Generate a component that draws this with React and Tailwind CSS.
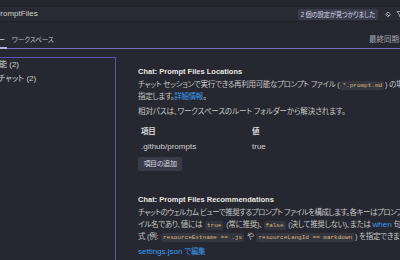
import React from "react";

const C = ({ children }) => (
  <span className="font-['Liberation_Mono',monospace] text-[6px] leading-[9px] tracking-normal bg-[#34353f] text-[#d4b87a] rounded-[2px] px-[2px] py-[1px] mx-[1px] [font-feature-settings:normal]">
    {children}
  </span>
);

const L = ({ children, className = "" }) => (
  <span className={"text-[8px] tracking-normal " + className}>{children}</span>
);

export default function App() {
  return (
    <div className="w-[400px] h-[260px] overflow-hidden bg-[#262730] text-[#c8c8c8] font-['Liberation_Sans','Noto_Sans_CJK_JP',sans-serif] [font-feature-settings:'palt'] relative">
      {/* top strip */}
      <div className="h-[7px] bg-[#24252d] border-b border-[#1f2028]" />
      {/* search row */}
      <div className="h-[15px] bg-[#292a34] border-b border-[#1f2028] flex items-center overflow-hidden">
        <span className="ml-[-5px] text-[8px] text-[#d0d0d0] whitespace-nowrap">PromptFiles</span>
        <div className="flex-1" />
        <span className="h-[11px] px-[3px] bg-[#3a3c4c] rounded-[2px] text-[6.3px] leading-[11px] tracking-[-0.2px] text-[#d6d6e0] whitespace-nowrap">
          2 個の設定が見つかりました
        </span>
        <svg className="ml-[6px] shrink-0" width="8" height="8" viewBox="0 0 16 16" fill="none" stroke="#b0b0b8" strokeWidth="1.8">
          <path d="M3 9 L8 4 L13 9 L9 13 L7 13 Z" />
          <path d="M5 7 L10 12" />
        </svg>
        <svg className="ml-[4px] mr-[-4px] shrink-0" width="8" height="8" viewBox="0 0 16 16" fill="none" stroke="#b0b0b8" strokeWidth="1.8">
          <path d="M2 3 H14 L9.5 9 V14 L6.5 12.5 V9 Z" />
        </svg>
      </div>
      {/* tabs */}
      <div className="mt-[4px] h-[23px] border-b border-[#7c6cc0] flex items-start relative">
        <div className="h-[22px] pt-[6px] flex items-center ml-[-2px] w-[9px] relative">
          <span className="text-[7px] text-[#d0d0d8] whitespace-nowrap">ー</span>
          <div className="absolute left-0 right-0 bottom-[-1px] h-[2px] bg-[#b8b0d8]" />
        </div>
        <div className="h-[22px] pt-[6px] flex items-center ml-[5px]">
          <span className="text-[6.5px] text-[#c0c0c8] whitespace-nowrap">ワークスペース</span>
        </div>
        <div className="flex-1" />
        <div className="h-[22px] pt-[6px] flex items-center mr-[-1px]">
          <span className="text-[7.5px] text-[#a8a8b0] whitespace-nowrap">最終同期:</span>
        </div>
      </div>
      {/* body */}
      <div className="flex mt-[8px]">
        <div className="w-[116px] h-[210px] shrink-0 border-t border-r border-[#5e53a8] overflow-hidden">
          <div className="h-[14px] flex items-center ml-[-9px] text-[8px] text-[#cfcfcf] whitespace-nowrap">機能 (2)</div>
          <div className="h-[14px] flex items-center ml-[-2px] text-[8px] text-[#cfcfcf] whitespace-nowrap">チャット (2)</div>
        </div>
        <div className="ml-[22px] flex-1 min-w-0 text-[7.5px] tracking-[-0.3px] whitespace-nowrap">
          <div className="mt-[8px] h-[14px] leading-[14px] font-bold text-[7.5px] tracking-normal text-[#e6e6e6]">Chat: Prompt Files Locations</div>
          <div className="h-[12px] leading-[12px]">
            チャット セッションで実行できる再利用可能なプロンプト ファイル (<C>*.prompt.md</C>) の場所を
          </div>
          <div className="h-[12px] leading-[12px]">
            指定します。<span className="text-[#3b9cf0]">詳細情報</span>。
          </div>
          <div className="mt-[3px] h-[12px] leading-[12px] tracking-[-0.1px]">相対パスは、ワークスペースのルート フォルダーから解決されます。</div>
          <div className="mt-[6px] h-[15px] leading-[15px] flex font-bold text-[#d8d8d8]">
            <span className="w-[114px] pl-[3px]">項目</span>
            <span>値</span>
          </div>
          <div className="h-[15px] leading-[15px] flex text-[#d0d0d0]">
            <span className="w-[114px] pl-[3px]"><L>.github/prompts</L></span>
            <L>true</L>
          </div>
          <div className="mt-[3px] w-[44px] h-[14px] bg-[#393b4a] rounded-[2px] flex items-center justify-center text-[7px] text-[#dcdce0]">
            項目の追加
          </div>
          <div className="mt-[22px] h-[14px] leading-[14px] font-bold text-[7.5px] tracking-normal text-[#e6e6e6]">Chat: Prompt Files Recommendations</div>
          <div className="h-[12px] leading-[12px] tracking-[-0.5px]">
            チャットのウェルカム ビューで推奨するプロンプト ファイルを構成します。各キーはプロンプト ファ
          </div>
          <div className="h-[12px] leading-[12px]">
            イル名であり、値には <C>true</C> (常に推奨)、<C>false</C> (決して推奨しない)、または <L className="text-[#3b9cf0]">when</L> 句
          </div>
          <div className="h-[12px] leading-[12px]">
            式 (例: <C>resourceExtname == .js</C> や <C>resourceLangId == markdown</C>) を指定できます
          </div>
          <div className="mt-[3px] h-[12px] leading-[12px] text-[#3b9cf0]"><L>settings.json</L> で編集</div>
        </div>
      </div>
    </div>
  );
}
